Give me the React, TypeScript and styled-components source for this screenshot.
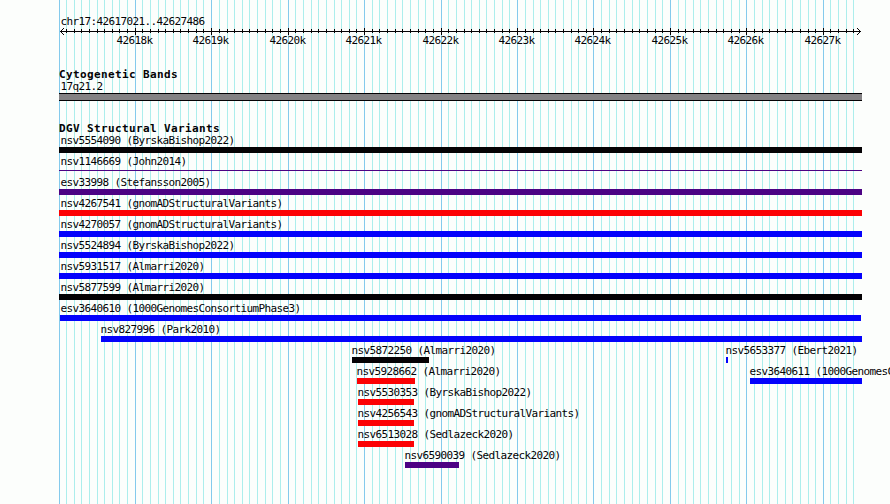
import styled, { createGlobalStyle } from "styled-components";

const COLORS = {
	PAPER: "#fcfefc",
	INK: "#040204",
	BAND: "#848284",
	GRID: "#aceeec",
	GRID_MAJOR: "#84caec",
	LOSS: "#fc0204",
	GAIN: "#0402fc",
	COMPLEX: "#4c0284",
};

const PANEL_LEFT = 59;
const LABEL_MIN = 60;
const MONO = `"DejaVu Sans Mono", "Liberation Mono", monospace`;

// pixel column of every 100 bp line, the majors are the 1 kb ones
const MAJOR = [135, 211, 288, 364, 441, 517, 593, 670, 746, 823];
const MINOR = [
	66, 74, 81, 89, 97, 104, 112, 119, 127, 142, 150, 158, 165, 173, 180, 188,
	196, 203, 219, 227, 234, 242, 249, 257, 265, 272, 280, 295, 303, 311, 318,
	326, 334, 341, 349, 356, 372, 379, 387, 395, 402, 410, 418, 425, 433, 448,
	456, 464, 471, 479, 486, 494, 502, 509, 525, 533, 540, 548, 555, 563, 571,
	578, 586, 601, 609, 616, 624, 632, 639, 647, 655, 662, 678, 685, 693, 700,
	708, 716, 723, 731, 739, 754, 762, 769, 777, 785, 792, 800, 808, 815, 830,
	838, 846, 853,
];

interface Variant {
	name: string;
	start: number;
	end: number;
	color: string;
	thin?: boolean;
}

const ROWS: Variant[][] = [
	[{ name: "nsv5554090 (ByrskaBishop2022)", start: 59, end: 862, color: COLORS.INK }],
	[{ name: "nsv1146669 (John2014)", start: 59, end: 862, color: COLORS.COMPLEX, thin: true }],
	[{ name: "esv33998 (Stefansson2005)", start: 59, end: 862, color: COLORS.COMPLEX }],
	[{ name: "nsv4267541 (gnomADStructuralVariants)", start: 59, end: 862, color: COLORS.LOSS }],
	[{ name: "nsv4270057 (gnomADStructuralVariants)", start: 59, end: 862, color: COLORS.GAIN }],
	[{ name: "nsv5524894 (ByrskaBishop2022)", start: 59, end: 862, color: COLORS.GAIN }],
	[{ name: "nsv5931517 (Almarri2020)", start: 59, end: 862, color: COLORS.GAIN }],
	[{ name: "nsv5877599 (Almarri2020)", start: 59, end: 862, color: COLORS.INK }],
	[{ name: "esv3640610 (1000GenomesConsortiumPhase3)", start: 60, end: 861, color: COLORS.GAIN }],
	[{ name: "nsv827996 (Park2010)", start: 101, end: 862, color: COLORS.GAIN }],
	[
		{ name: "nsv5872250 (Almarri2020)", start: 352, end: 429, color: COLORS.INK },
		{ name: "nsv5653377 (Ebert2021)", start: 726, end: 728, color: COLORS.GAIN },
	],
	[
		{ name: "nsv5928662 (Almarri2020)", start: 357, end: 415, color: COLORS.LOSS },
		{ name: "esv3640611 (1000GenomesConsortiumPhase3)", start: 750, end: 862, color: COLORS.GAIN },
	],
	[{ name: "nsv5530353 (ByrskaBishop2022)", start: 358, end: 414, color: COLORS.LOSS }],
	[{ name: "nsv4256543 (gnomADStructuralVariants)", start: 358, end: 414, color: COLORS.LOSS }],
	[{ name: "nsv6513028 (Sedlazeck2020)", start: 358, end: 414, color: COLORS.LOSS }],
	[{ name: "nsv6590039 (Sedlazeck2020)", start: 405, end: 459, color: COLORS.COMPLEX }],
];

const GlobalStyle = createGlobalStyle`
	body {
		margin: 0;
		background: ${COLORS.PAPER};
	}
`;
const StyledPage = styled.main`
	position: relative;
	width: 890px;
	height: 504px;
	overflow: hidden;
	color: ${COLORS.INK};
	background: ${COLORS.PAPER};
	font: 11px/17px ${MONO};
	letter-spacing: -0.622px;
	white-space: pre;
`;
const StyledGrid = styled.svg`
	position: absolute;
	inset: 0;
`;
const StyledContent = styled.div`
	position: relative;
	display: flex;
	flex-direction: column;
	padding-top: 13px;
`;
const StyledLabel = styled.div<{ $start: number }>`
	height: 15px;
	margin-left: ${({ $start }) => Math.max(LABEL_MIN, $start - 1) + 0.4}px;
`;
const StyledRuler = styled.svg`
	display: block;
	height: 20px;
	overflow: visible;
`;
const StyledTrack = styled.section<{ $gap: number }>`
	display: flex;
	flex-direction: column;
	padding-top: ${({ $gap }) => $gap}px;
`;
const StyledTitle = styled.h2`
	height: 12px;
	margin: 0 0 0 ${PANEL_LEFT}px;
	font: bold 11px/17px ${MONO};
	letter-spacing: 0.378px;
`;
const StyledBand = styled.div`
	box-sizing: border-box;
	width: 803px;
	height: 8px;
	margin-left: ${PANEL_LEFT}px;
	border: solid ${COLORS.INK};
	border-width: 1px 0;
	background: ${COLORS.BAND};
`;
const StyledRow = styled.div`
	display: grid;
	height: 21px;
`;
const StyledVariant = styled.div`
	grid-area: 1 / 1;
	min-width: 0;
`;
const StyledBar = styled.div<{
	$start: number;
	$end: number;
	$color: string;
	$thin?: boolean;
}>`
	width: ${({ $start, $end }) => $end - $start}px;
	height: ${({ $thin }) => ($thin ? 1 : 6)}px;
	margin: ${({ $thin }) => ($thin ? 2 : 0)}px 0 0 ${({ $start }) => $start}px;
	background: ${({ $color }) => $color};
`;

const GridLines = () => (
	<StyledGrid width="890" height="504" shapeRendering="crispEdges">
		{MINOR.map((x) => (
			<rect key={x} x={x} width="1" height="504" fill={COLORS.GRID} />
		))}
		{[PANEL_LEFT, ...MAJOR].map((x) => (
			<rect key={x} x={x} width="1" height="504" fill={COLORS.GRID_MAJOR} />
		))}
	</StyledGrid>
);

const Ruler = () => (
	<StyledRuler width="890" height="20" fill={COLORS.INK}>
		<g shapeRendering="crispEdges">
			<rect x="60" y="3" width="801" height="1" />
			{MINOR.map((x) => (
				<rect key={x} x={x} y="1" width="1" height="4" />
			))}
			{MAJOR.map((x) => (
				<rect key={x} x={x} y="0" width="1" height="7" />
			))}
			{[1, 2, 3].map((d) => (
				<g key={d}>
					<rect x={60 + d} y={3 - d} width="1" height="1" />
					<rect x={60 + d} y={3 + d} width="1" height="1" />
					<rect x={860 - d} y={3 - d} width="1" height="1" />
					<rect x={860 - d} y={3 + d} width="1" height="1" />
				</g>
			))}
		</g>
		{MAJOR.map((x, i) => (
			<text key={x} x={x - 18.6} y="16">
				{`${42618 + i}k`}
			</text>
		))}
	</StyledRuler>
);

const App = (): JSX.Element => (
	<>
		<GlobalStyle />
		<StyledPage>
			<GridLines />
			<StyledContent>
				<StyledLabel $start={LABEL_MIN}>chr17:42617021..42627486</StyledLabel>
				<Ruler />
				<StyledTrack $gap={18}>
					<StyledTitle>Cytogenetic Bands</StyledTitle>
					<StyledLabel $start={LABEL_MIN}>17q21.2</StyledLabel>
					<StyledBand />
				</StyledTrack>
				<StyledTrack $gap={19}>
					<StyledTitle>DGV Structural Variants</StyledTitle>
					{ROWS.map((row) => (
						<StyledRow key={row[0].name}>
							{row.map(({ name, start, end, color, thin }) => (
								<StyledVariant key={name}>
									<StyledLabel $start={start}>{name}</StyledLabel>
									<StyledBar $start={start} $end={end} $color={color} $thin={thin} />
								</StyledVariant>
							))}
						</StyledRow>
					))}
				</StyledTrack>
			</StyledContent>
		</StyledPage>
	</>
);

export default App;
